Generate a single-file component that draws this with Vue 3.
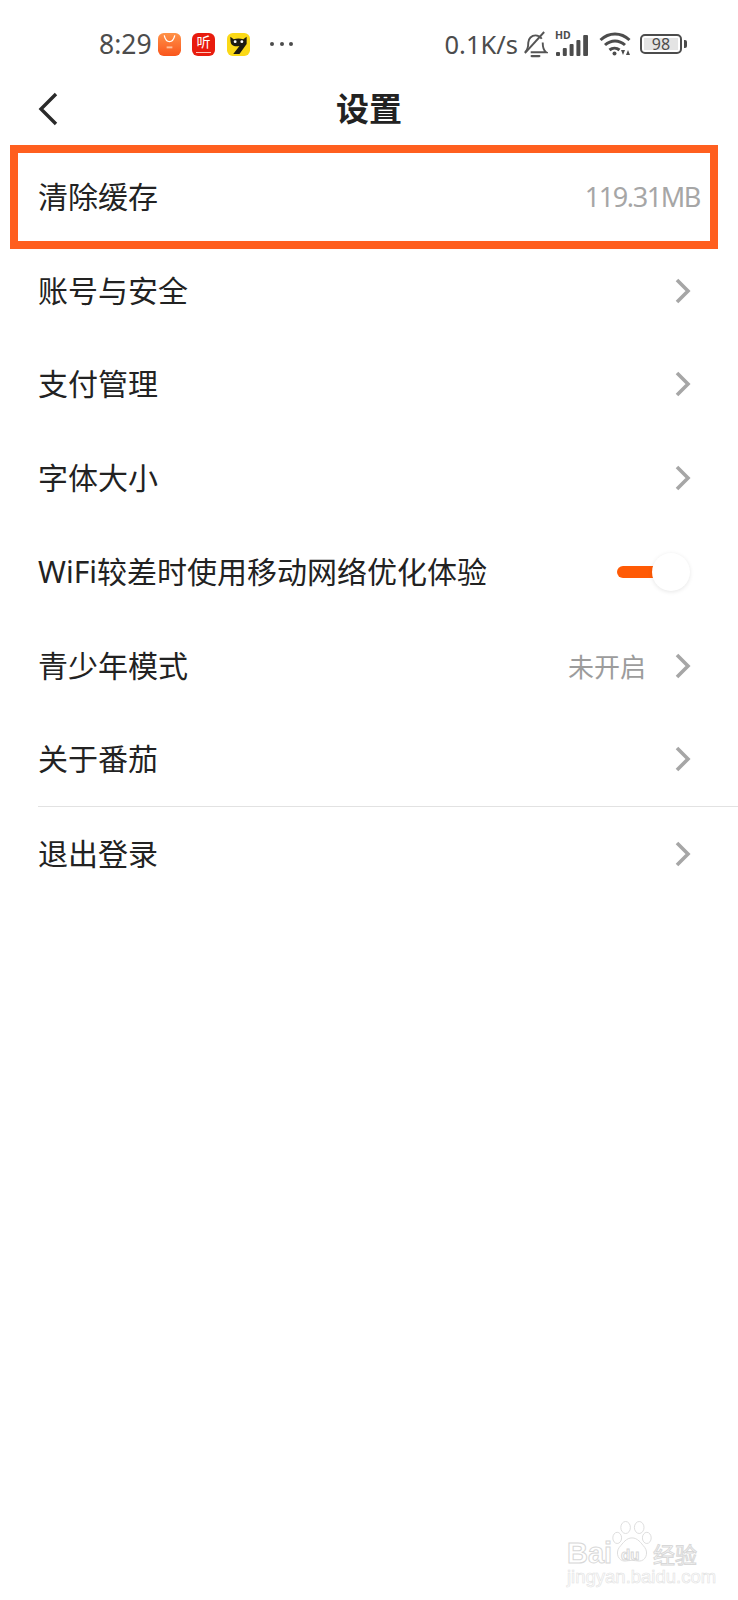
<script setup>
const rows = [
  { label: '账号与安全', arrow: true },
  { label: '支付管理', arrow: true },
  { label: '字体大小', arrow: true },
  { label: 'WiFi较差时使用移动网络优化体验', toggle: true },
  { label: '青少年模式', value: '未开启', arrow: true },
  { label: '关于番茄', arrow: true },
]
</script>

<template>
  <div class="page">
    <div class="status">
      <div class="status-left">
        <span class="time">8:29</span>
        <svg class="app" viewBox="0 0 24 24">
          <defs>
            <linearGradient id="shop" x1="0" y1="0" x2="0" y2="1">
              <stop offset="0" stop-color="#ff9248" />
              <stop offset="1" stop-color="#f9551c" />
            </linearGradient>
          </defs>
          <rect width="24" height="24" rx="6" fill="url(#shop)" />
          <path d="M6.500 2.500c1 4.500 3 6.500 5.500 6.500s4.500-2 5.500-6.500" fill="none" stroke="#fff" stroke-width="1.300" />
          <rect x="9" y="14" width="6" height="2" fill="#ffc09a" />
        </svg>
        <div class="app app-red">
          <span>听</span>
          <i></i>
        </div>
        <svg class="app" viewBox="0 0 24 24">
          <rect width="24" height="24" rx="6" fill="#fbd917" />
          <path d="M3.500 4 7 6.500c3-1 7-1 10 0L20.500 4v7.500L13 22H6.500l6.500-8.500c-3 .5-6 .5-7.500-1-1.500-1-2-3-2-8.500z" fill="#1c1a12" />
          <circle cx="8.500" cy="9" r="1.500" fill="#fff" />
          <circle cx="15.500" cy="9" r="1.500" fill="#fff" />
        </svg>
        <div class="dots"><i></i><i></i><i></i></div>
      </div>
      <div class="status-right">
        <span class="speed">0.1K/s</span>
        <svg class="bell" viewBox="0 0 26 28" fill="none" stroke="#555" stroke-width="2">
          <path d="M2 22c3-2 3.500-5 3.500-10 0-4 3.500-7.500 7.500-7.500 2.500 0 5 1.500 6.500 3.500M20.500 12c0 5 .5 8 3.500 10H8" />
          <path d="M9 26h8" stroke-width="2.400" stroke-linecap="round" />
          <path d="M2 23 22 1" />
        </svg>
        <div class="signal">
          <span class="hd">HD</span>
          <svg class="bars" viewBox="0 0 32 21" fill="#4c4c4c">
            <rect x="0" y="17" width="4" height="4" rx="1" />
            <rect x="6.800" y="13" width="4" height="8" rx="1" />
            <rect x="13.600" y="9" width="4" height="12" rx="1" />
            <rect x="20.400" y="5" width="4" height="16" rx="1" />
            <rect x="27.200" y="0" width="4.800" height="21" rx="1" />
          </svg>
        </div>
        <svg class="wifi" viewBox="0 0 32 24" fill="none" stroke="#4c4c4c" stroke-width="3">
          <path d="M1.500 8c8.500-8 20.500-8 29 0" />
          <path d="M6 13c6-5.500 14-5.500 20 0" />
          <path d="M10.500 18c3-2.500 7-2.500 10 0" />
          <circle cx="15.500" cy="21.500" r="2" fill="#4c4c4c" stroke="none" />
          <path d="M22 18h4l-2 5zM27 23h4l-2-5z" fill="#4c4c4c" stroke="none" />
        </svg>
        <div class="battery">
          <div class="battery-body"><span>98</span></div>
          <i></i>
        </div>
      </div>
    </div>

    <div class="nav">
      <svg class="back" viewBox="0 0 22 34" fill="none" stroke="#2a2a2a" stroke-width="3.400">
        <path d="M19 2 4 17l15 15" />
      </svg>
      <div class="title">设置</div>
    </div>

    <div class="row highlight">
      <span class="label">清除缓存</span>
      <span class="size">119.31MB</span>
    </div>

    <div v-for="row in rows" :key="row.label" class="row">
      <span class="label">{{ row.label }}</span>
      <div class="row-right">
        <span v-if="row.value" class="value">{{ row.value }}</span>
        <svg v-if="row.arrow" class="arrow" viewBox="0 0 18 28" fill="none" stroke="#a6a6a6" stroke-width="3.600">
          <path d="M3 3l11 11L3 25" />
        </svg>
        <div v-if="row.toggle" class="toggle">
          <div class="toggle-bar"></div>
          <div class="toggle-knob"></div>
        </div>
      </div>
    </div>

    <div class="divider"></div>

    <div class="row">
      <span class="label">退出登录</span>
      <div class="row-right">
        <svg class="arrow" viewBox="0 0 18 28" fill="none" stroke="#a6a6a6" stroke-width="3.600">
          <path d="M3 3l11 11L3 25" />
        </svg>
      </div>
    </div>

    <div class="watermark">
      <div class="wm-top">
        <span class="wm-bai">Bai</span>
        <div class="wm-paw">
          <svg viewBox="0 0 50 56" fill="#fff" stroke="#ddd" stroke-width="1.200">
            <ellipse cx="17" cy="8" rx="6" ry="7.500" />
            <ellipse cx="34" cy="8" rx="6" ry="7.500" />
            <ellipse cx="6.500" cy="21" rx="5.500" ry="7" />
            <ellipse cx="43.500" cy="21" rx="5.500" ry="7" />
            <path d="M25 21c7 0 11 6 16 12 5 7 1 17-7 17-3 0-6-1-9-1s-6 1-9 1c-8 0-12-10-7-17 5-6 9-12 16-12z" />
          </svg>
          <span class="wm-du">du</span>
        </div>
        <span class="wm-cn">经验</span>
      </div>
      <div class="wm-url">jingyan.baidu.com</div>
    </div>
  </div>
</template>

<style>
html, body {
  margin: 0;
  background: #fff;
}
</style>

<style scoped>
.page {
  position: relative;
  width: 738px;
  height: 1600px;
  overflow: hidden;
  background: #fff;
  font-family: "Noto Sans", "Noto Sans CJK SC", sans-serif;
  color: #222;
}

.status {
  height: 78px;
  box-sizing: border-box;
  padding: 26px 51px 0 99px;
  display: flex;
  justify-content: space-between;
  align-items: flex-start;
  color: #4c4c4c;
}

.status-left,
.status-right {
  display: flex;
  align-items: center;
  height: 36px;
}

.time {
  font-size: 26.500px;
  margin-right: 6px;
}

.app {
  width: 23px;
  height: 23px;
  margin-right: 11.500px;
  flex: none;
}

.app-red {
  position: relative;
  background: #e81c0e;
  border-radius: 6px;
  color: #fff;
  font-size: 14px;
  line-height: 17px;
  text-align: center;
}

.app-red span {
  display: block;
}

.app-red i {
  position: absolute;
  left: 4px;
  right: 4px;
  bottom: 3px;
  height: 1px;
  background: #ffc4b8;
}

.dots {
  display: flex;
  gap: 5.500px;
  margin-left: 9px;
}

.dots i {
  width: 4px;
  height: 4px;
  border-radius: 50%;
  background: #4c4c4c;
}

.speed {
  font-size: 25.500px;
  margin-right: 5px;
}

.bell {
  width: 25px;
  height: 27px;
  margin-right: 8px;
}

.signal {
  position: relative;
  width: 33px;
  height: 24px;
  margin-right: 10px;
}

.hd {
  position: absolute;
  left: -1px;
  top: -1px;
  font-size: 10.500px;
  font-weight: 700;
  line-height: 9px;
}

.bars {
  position: absolute;
  left: 0;
  bottom: 0;
  width: 32px;
  height: 21px;
}

.wifi {
  width: 32px;
  height: 24px;
  margin-right: 9px;
}

.battery {
  display: flex;
  align-items: center;
}

.battery-body {
  width: 42px;
  height: 20px;
  box-sizing: border-box;
  border: 2px solid #4c4c4c;
  border-radius: 5px;
  padding: 2px;
}

.battery-body span {
  display: block;
  height: 12px;
  background: #e4e4e4;
  font-size: 16px;
  line-height: 12px;
  text-align: center;
}

.battery i {
  width: 3px;
  height: 8px;
  margin-left: 2px;
  border-radius: 0 2px 2px 0;
  background: #4c4c4c;
}

.nav {
  height: 62px;
  margin-bottom: 10px;
  position: relative;
  display: flex;
  align-items: center;
  justify-content: center;
}

.back {
  position: absolute;
  left: 37px;
  top: 14px;
  width: 22px;
  height: 34px;
}

.title {
  font-size: 33px;
  font-weight: 700;
  line-height: 40px;
}

.row {
  position: relative;
  height: 93.750px;
  box-sizing: border-box;
  padding: 0 46px 0 38px;
  display: flex;
  align-items: center;
  justify-content: space-between;
}

.highlight {
  padding-right: 38px;
}

/* the orange frame drawn on the screenshot */
.highlight::after {
  content: "";
  position: absolute;
  left: 10px;
  right: 20px;
  top: -5px;
  bottom: -5px;
  border: 8px solid #ff5f1f;
}

.label {
  font-size: 30px;
  line-height: 40px;
}

.size {
  font-size: 27px;
  color: #a6a6a6;
  letter-spacing: -1.400px;
}

.row-right {
  display: flex;
  align-items: center;
}

.value {
  font-size: 26px;
  color: #9c9c9c;
  margin-right: 28px;
}

.arrow {
  width: 18px;
  height: 28px;
}

.toggle {
  position: relative;
  width: 73px;
  height: 38px;
  margin-right: 2px;
}

.toggle-bar {
  position: absolute;
  left: 0;
  top: 13px;
  width: 36px;
  height: 12px;
  border-radius: 6px 0 0 6px;
  background: #ff5a05;
}

.toggle-knob {
  position: absolute;
  right: 0;
  top: 0;
  width: 38px;
  height: 38px;
  border-radius: 50%;
  background: #fff;
  box-shadow: 0 1px 4px rgba(0, 0, 0, 0.1);
}

.divider {
  height: 1px;
  margin: 0 0 0 38px;
  background: #e2e2e2;
}

.watermark {
  position: absolute;
  left: 567px;
  top: 1520px;
  width: 132px;
}

.wm-top {
  display: flex;
  align-items: flex-end;
  height: 47px;
}

.wm-bai,
.wm-cn,
.wm-url,
.wm-du {
  color: #fff;
  -webkit-text-stroke: 1px #d8d8d8;
}

.wm-bai {
  width: 45px;
  font-family: "Liberation Sans", sans-serif;
  font-size: 29px;
  font-weight: 700;
  line-height: 27px;
}

.wm-paw {
  position: relative;
  width: 40px;
  height: 47px;
}

.wm-paw svg {
  display: block;
  width: 40px;
  height: 47px;
}

.wm-du {
  position: absolute;
  left: 9px;
  bottom: 3px;
  font-family: "Liberation Sans", sans-serif;
  font-size: 15px;
  font-weight: 700;
  line-height: 18px;
}

.wm-cn {
  font-size: 22px;
  line-height: 26px;
  margin-left: 1px;
  white-space: nowrap;
}

.wm-url {
  margin-top: 1px;
  font-family: "Liberation Sans", sans-serif;
  font-size: 18.500px;
  line-height: 18px;
  -webkit-text-stroke: 0.6px #e2e2e2;
  white-space: nowrap;
}
</style>
